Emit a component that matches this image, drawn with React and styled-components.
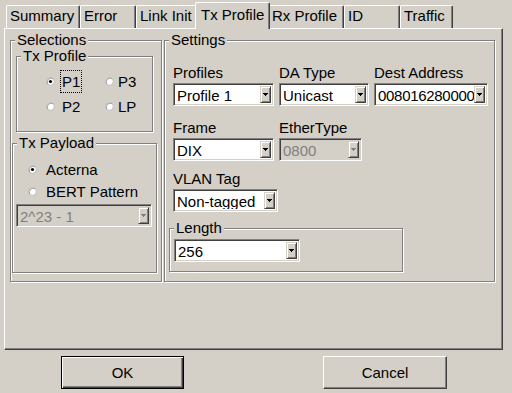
import React from 'react';
import styled, { createGlobalStyle } from 'styled-components';

const Global = createGlobalStyle`
  html, body { margin: 0; padding: 0; background: #d4d0c8; }
  body { font-family: "Liberation Sans", Arial, sans-serif; font-size: 15px; color: #000; }
`;

const Window = styled.div`
  width: 512px; height: 393px; box-sizing: border-box;
  padding: 2px 9px 0 4px;
  display: flex; flex-direction: column;
  overflow: hidden;
`;

const TabBar = styled.div`
  display: flex; align-items: flex-end;
  height: 26px; padding-left: 2px;
  position: relative; z-index: 2;
`;

const Tab = styled.div`
  box-sizing: border-box;
  flex: none;
  width: ${p => p.$w}px;
  height: ${p => (p.$active ? 27 : 23)}px;
  margin: 0 ${p => (p.$active ? -2 : 0)}px ${p => (p.$active ? -1 : 0)}px;
  padding: ${p => (p.$active ? '3px 5px' : '1px 3px')};
  background: #d4d0c8;
  border-top: 1px solid #fff;
  border-left: 1px solid #fff;
  border-right: 1px solid #404040;
  box-shadow: inset -1px 0 #808080;
  border-radius: 2px 2px 0 0;
  line-height: 17px;
  white-space: nowrap;
  position: relative;
  z-index: ${p => (p.$active ? 2 : 1)};
`;

const Pane = styled.div`
  width: 499px; height: 322px; box-sizing: border-box;
  border: 1px solid; border-color: #fff #404040 #404040 #fff;
  box-shadow: inset -1px -1px #808080;
  padding: 11px 0 0 5px;
  display: flex; gap: 2px; align-items: flex-start;
  position: relative; z-index: 1;
`;

const Group = styled.div`
  position: relative; box-sizing: border-box; flex: none;
  width: ${p => p.$w}px; height: ${p => p.$h}px;
  margin: ${p => p.$m || '0'};
  border: 1px solid #808080;
  box-shadow: inset 1px 1px #fff, 1px 1px #fff;
  display: flex; flex-direction: column; align-items: flex-start;
`;

const Legend = styled.span`
  position: absolute; top: -10px; left: 4px;
  padding: 0 2px; background: #d4d0c8;
  line-height: 17px; white-space: nowrap;
`;

const RadioGrid = styled.div`
  display: grid; grid-template-columns: ${p => p.$cols || 'auto'};
  row-gap: ${p => p.$gap}px;
  padding: ${p => p.$pad};
`;

const RadioItem = styled.div`
  display: flex; align-items: center; gap: ${p => p.$gap}px;
  height: ${p => p.$h}px;
`;

const RadioLabel = styled.span`
  line-height: 17px; padding: 2px 1px;
  border: 1px dotted ${p => (p.$focus ? '#000' : 'transparent')};
`;

const Circle = styled.svg`
  flex: none; display: block;
`;

const Radio = ({ label, checked, focus, h, gap = 5 }) => (
  <RadioItem $h={h} $gap={gap}>
    <Circle width="9" height="9" viewBox="0 0 9 9">
      <circle cx="4.5" cy="4.5" r="3.9" fill="#fff" stroke="#b4b4b4" strokeWidth="0.9" />
      <path d="M1.7 6.8A3.8 3.8 0 0 1 6.8 1.7" fill="none" stroke="#8a8a8a" strokeWidth="0.8" />
      {checked && <circle cx="4.5" cy="4.5" r="1.6" fill="#000" />}
    </Circle>
    <RadioLabel $focus={focus}>{label}</RadioLabel>
  </RadioItem>
);

const ComboBox = styled.div`
  box-sizing: border-box; flex: none;
  width: ${p => p.$w}px; height: 23px;
  margin: ${p => p.$m || '0'};
  border: 1px solid; border-color: #808080 #fff #fff #808080;
  box-shadow: inset 1px 1px #404040, inset -1px -1px #d4d0c8;
  background: ${p => (p.$disabled ? '#d4d0c8' : '#fff')};
  display: flex; align-items: stretch; padding: 2px;
`;

const ComboText = styled.span`
  flex: 1; min-width: 0; overflow: hidden; white-space: nowrap;
  padding-left: 1px;
  font-size: 15px; line-height: 19px;
  letter-spacing: ${p => (p.$tight ? '-0.3px' : '0')};
  color: ${p => (p.$disabled ? '#808080' : '#000')};
`;

const DropBtn = styled.span`
  flex: none; width: 11px; box-sizing: border-box;
  background: #d4d0c8;
  border: 1px solid; border-color: #d4d0c8 #404040 #404040 #d4d0c8;
  box-shadow: inset 1px 1px #fff, inset -1px -1px #808080;
  display: flex; align-items: center; justify-content: center;
`;

const Combo = ({ w, value, disabled, m, tight }) => (
  <ComboBox $w={w} $disabled={disabled} $m={m}>
    <ComboText $disabled={disabled} $tight={tight}>{value}</ComboText>
    <DropBtn>
      <svg width="5" height="3" viewBox="0 0 5 3">
        <path d="M0 0h5v1H0zM1 1h3v1H1zM2 2h1v1H2z" fill={disabled ? '#808080' : '#000'} />
      </svg>
    </DropBtn>
  </ComboBox>
);

const Settings = styled.div`
  display: flex; flex-direction: column; padding-left: 8px;
`;

const Row = styled.div`
  display: flex; gap: 5px; margin-top: ${p => p.$mt}px;
`;

const Field = styled.div`
  display: flex; flex-direction: column; gap: 2px;
`;

const Label = styled.span`
  line-height: 17px; white-space: nowrap;
`;

const ButtonRow = styled.div`
  display: flex; gap: 139px; padding-left: 57px; margin-top: 6px;
`;

const Button = styled.div`
  box-sizing: border-box;
  width: ${p => p.$w}px; height: 33px;
  display: flex; align-items: center; justify-content: center;
  background: #d4d0c8;
  border: 1px solid;
  border-color: ${p => (p.$default ? '#000' : '#fff #404040 #404040 #fff')};
  box-shadow: ${p => (p.$default
    ? 'inset 1px 1px #fff, inset -1px -1px #404040, inset -2px -2px #808080'
    : 'inset -1px -1px #808080')};
`;

const tabs = [
  ['Summary', 74], ['Error', 56], ['Link Init', 61], ['Tx Profile', 75],
  ['Rx Profile', 76], ['ID', 56], ['Traffic', 53],
];

export default function App() {
  return (
    <>
      <Global />
      <Window>
        <TabBar>
          {tabs.map(([t, w]) => (
            <Tab key={t} $w={w} $active={t === 'Tx Profile'}>{t}</Tab>
          ))}
        </TabBar>
        <Pane>
          <Group $w={152} $h={242}>
            <Legend>Selections</Legend>
            <Group $w={137} $h={76} $m="15px 0 0 5px">
              <Legend>Tx Profile</Legend>
              <RadioGrid $cols="59px auto" $gap={2} $pad="13px 0 0 29px">
                <Radio label="P1" checked focus h={23} />
                <Radio label="P3" h={23} gap={2} />
                <Radio label="P2" h={23} />
                <Radio label="LP" h={23} gap={2} />
              </RadioGrid>
            </Group>
            <Group $w={145} $h={130} $m="11px 0 0 1px">
              <Legend>Tx Payload</Legend>
              <RadioGrid $gap={2} $pad="15px 0 0 15px">
                <Radio label="Acterna" checked h={20} gap={7} />
                <Radio label="BERT Pattern" h={20} gap={7} />
              </RadioGrid>
              <Combo w={136} value="2^23 - 1" disabled m="3px 0 0 3px" />
            </Group>
          </Group>
          <Group $w={331} $h={242}>
            <Legend>Settings</Legend>
            <Settings>
              <Row $mt={23}>
                <Field>
                  <Label>Profiles</Label>
                  <Combo w={101} value="Profile 1" />
                </Field>
                <Field>
                  <Label>DA Type</Label>
                  <Combo w={90} value="Unicast" />
                </Field>
                <Field>
                  <Label>Dest Address</Label>
                  <Combo w={114} value="008016280000" tight />
                </Field>
              </Row>
              <Row $mt={13}>
                <Field>
                  <Label>Frame</Label>
                  <Combo w={101} value="DIX" />
                </Field>
                <Field>
                  <Label>EtherType</Label>
                  <Combo w={83} value="0800" disabled />
                </Field>
              </Row>
              <Row $mt={9}>
                <Field>
                  <Label>VLAN Tag</Label>
                  <Combo w={105} value="Non-tagged" />
                </Field>
              </Row>
            </Settings>
            <Group $w={234} $h={44} $m="16px 0 0 4px">
              <Legend>Length</Legend>
              <Combo w={126} value="256" m="10px 0 0 4px" />
            </Group>
          </Group>
        </Pane>
        <ButtonRow>
          <Button $w={123} $default>OK</Button>
          <Button $w={124}>Cancel</Button>
        </ButtonRow>
      </Window>
    </>
  );
}
